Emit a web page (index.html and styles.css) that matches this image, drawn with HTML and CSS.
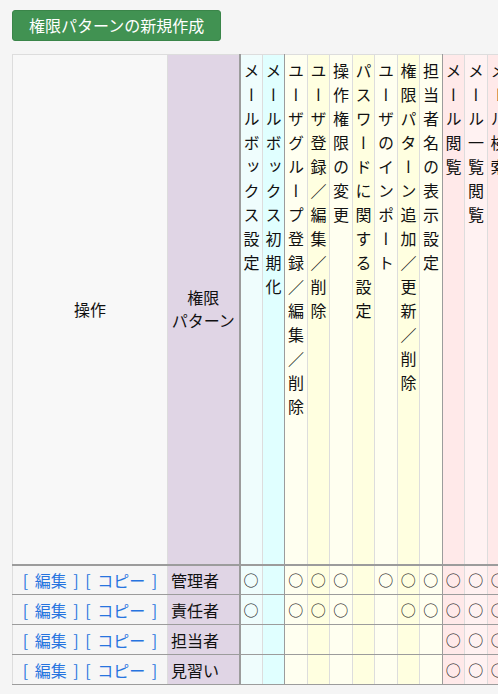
FILE: index.html
```html
<!DOCTYPE html>
<html lang="ja">
<head>
<meta charset="utf-8">
<title>権限パターン</title>
<link rel="stylesheet" href="styles.css">
</head>
<body>
<div class="page">
  <button class="btn-new" type="button">権限パターンの新規作成</button>
  <table class="perm">
    <colgroup>
      <col class="w-op"><col class="w-pat">
      <col class="w-c"><col class="w-c"><col class="w-c"><col class="w-c"><col class="w-c"><col class="w-c">
      <col class="w-c"><col class="w-c"><col class="w-c"><col class="w-c"><col class="w-c"><col class="w-c">
    </colgroup>
    <thead>
      <tr class="head-row">
        <th class="op mid">操作</th>
        <th class="pat mid">権限<br>パターン</th>
        <th class="cy1"><span class="vt">メールボックス設定</span></th>
        <th class="cy2 grp-end"><span class="vt">メールボックス初期化</span></th>
        <th class="ye1"><span class="vt">ユーザグループ登録／編集／削除</span></th>
        <th class="ye2"><span class="vt">ユーザ登録／編集／削除</span></th>
        <th class="ye1"><span class="vt">操作権限の変更</span></th>
        <th class="ye2"><span class="vt">パスワードに関する設定</span></th>
        <th class="ye1"><span class="vt">ユーザのインポート</span></th>
        <th class="ye2"><span class="vt">権限パターン追加／更新／削除</span></th>
        <th class="ye1 grp-end"><span class="vt">担当者名の表示設定</span></th>
        <th class="pk1"><span class="vt">メール閲覧</span></th>
        <th class="pk2"><span class="vt">メール一覧閲覧</span></th>
        <th class="pk1"><span class="vt">メール検索</span></th>
      </tr>
    </thead>
    <tbody>
      <tr>
        <td class="op"><a href="#">[ 編集 ]</a> <a href="#">[ コピー ]</a></td>
        <td class="pat">管理者</td>
        <td class="cy1 mk">○</td><td class="cy2 grp-end"></td>
        <td class="ye1 mk">○</td><td class="ye2 mk">○</td><td class="ye1 mk">○</td><td class="ye2"></td><td class="ye1 mk">○</td><td class="ye2 mk">○</td><td class="ye1 grp-end mk">○</td>
        <td class="pk1 mk">○</td><td class="pk2 mk">○</td><td class="pk1 mk">○</td>
      </tr>
      <tr>
        <td class="op"><a href="#">[ 編集 ]</a> <a href="#">[ コピー ]</a></td>
        <td class="pat">責任者</td>
        <td class="cy1 mk">○</td><td class="cy2 grp-end"></td>
        <td class="ye1 mk">○</td><td class="ye2 mk">○</td><td class="ye1 mk">○</td><td class="ye2"></td><td class="ye1"></td><td class="ye2 mk">○</td><td class="ye1 grp-end mk">○</td>
        <td class="pk1 mk">○</td><td class="pk2 mk">○</td><td class="pk1 mk">○</td>
      </tr>
      <tr>
        <td class="op"><a href="#">[ 編集 ]</a> <a href="#">[ コピー ]</a></td>
        <td class="pat">担当者</td>
        <td class="cy1"></td><td class="cy2 grp-end"></td>
        <td class="ye1"></td><td class="ye2"></td><td class="ye1"></td><td class="ye2"></td><td class="ye1"></td><td class="ye2"></td><td class="ye1 grp-end"></td>
        <td class="pk1 mk">○</td><td class="pk2 mk">○</td><td class="pk1 mk">○</td>
      </tr>
      <tr>
        <td class="op"><a href="#">[ 編集 ]</a> <a href="#">[ コピー ]</a></td>
        <td class="pat">見習い</td>
        <td class="cy1"></td><td class="cy2 grp-end"></td>
        <td class="ye1"></td><td class="ye2"></td><td class="ye1"></td><td class="ye2"></td><td class="ye1"></td><td class="ye2"></td><td class="ye1 grp-end"></td>
        <td class="pk1 mk">○</td><td class="pk2 mk">○</td><td class="pk1 mk">○</td>
      </tr>
    </tbody>
  </table>
</div>
</body>
</html>
```

FILE: styles.css
```css
html, body {
  margin: 0;
  padding: 0;
  background: #f5f5f5;
  overflow: hidden;
}
body {
  font-family: "Noto Sans CJK JP", "Noto Sans", sans-serif;
  font-size: 16px;
  color: #111;
}
.page {
  padding: 10px 12px 0;
  display: flex;
  flex-direction: column;
  align-items: flex-start;
  gap: 13px;
}
.btn-new {
  font-family: inherit;
  font-size: 16px;
  line-height: 23px;
  color: #fff;
  background: #419252;
  border: 1px solid #3a8549;
  border-radius: 3px;
  padding: 3px 16px;
  margin: 0;
}
.perm {
  border-collapse: collapse;
  table-layout: fixed;
  width: 497px;
  flex: none;
  border-top: 1px solid #ddd;
  border-left: 1px solid #ddd;
}
.w-op { width: 155px; }
.w-pat { width: 72px; }
.w-c { width: 22.5px; }
.perm th, .perm td {
  padding: 0;
  font-weight: normal;
  border-left: 1px solid #ddd;
  border-right: 1px solid #ddd;
  border-bottom: 1px solid #9c9c9c;
  text-align: center;
}
.head-row { height: 510px; }
.perm thead th {
  vertical-align: top;
  border-bottom: 2px solid #9c9c9c;
}
.perm thead th.mid { vertical-align: middle; }
.perm thead th.pat { line-height: 23px; }
.vt {
  display: inline-block;
  writing-mode: vertical-rl;
  letter-spacing: 8px;
  line-height: 22px;
  padding-top: 8px;
}
.perm tbody tr { height: 30px; }
.perm td { vertical-align: middle; line-height: 20px; }
.perm td.mk { font-size: 15px; }
.op { background: #f8f8f8; }
.perm tbody td.op { background: #f6f6f6; word-spacing: 3px; }
.op a {
  color: #2774df;
  text-decoration: none;
}
.pat {
  background: #e0d5e5;
  border-left: 1px solid #9c9c9c !important;
  border-right: 2px solid #9c9c9c !important;
}
.perm td.pat { text-align: left; padding-left: 3px; }
.grp-end { border-right: 1px solid #9c9c9c !important; }
.cy1 { background: #effdfd; }
.cy2 { background: #e0ffff; }
.ye1 { background: #fffff0; }
.ye2 { background: #ffffe0; }
.pk1 { background: #ffe9e9; }
.pk2 { background: #fff2f2; }
```
